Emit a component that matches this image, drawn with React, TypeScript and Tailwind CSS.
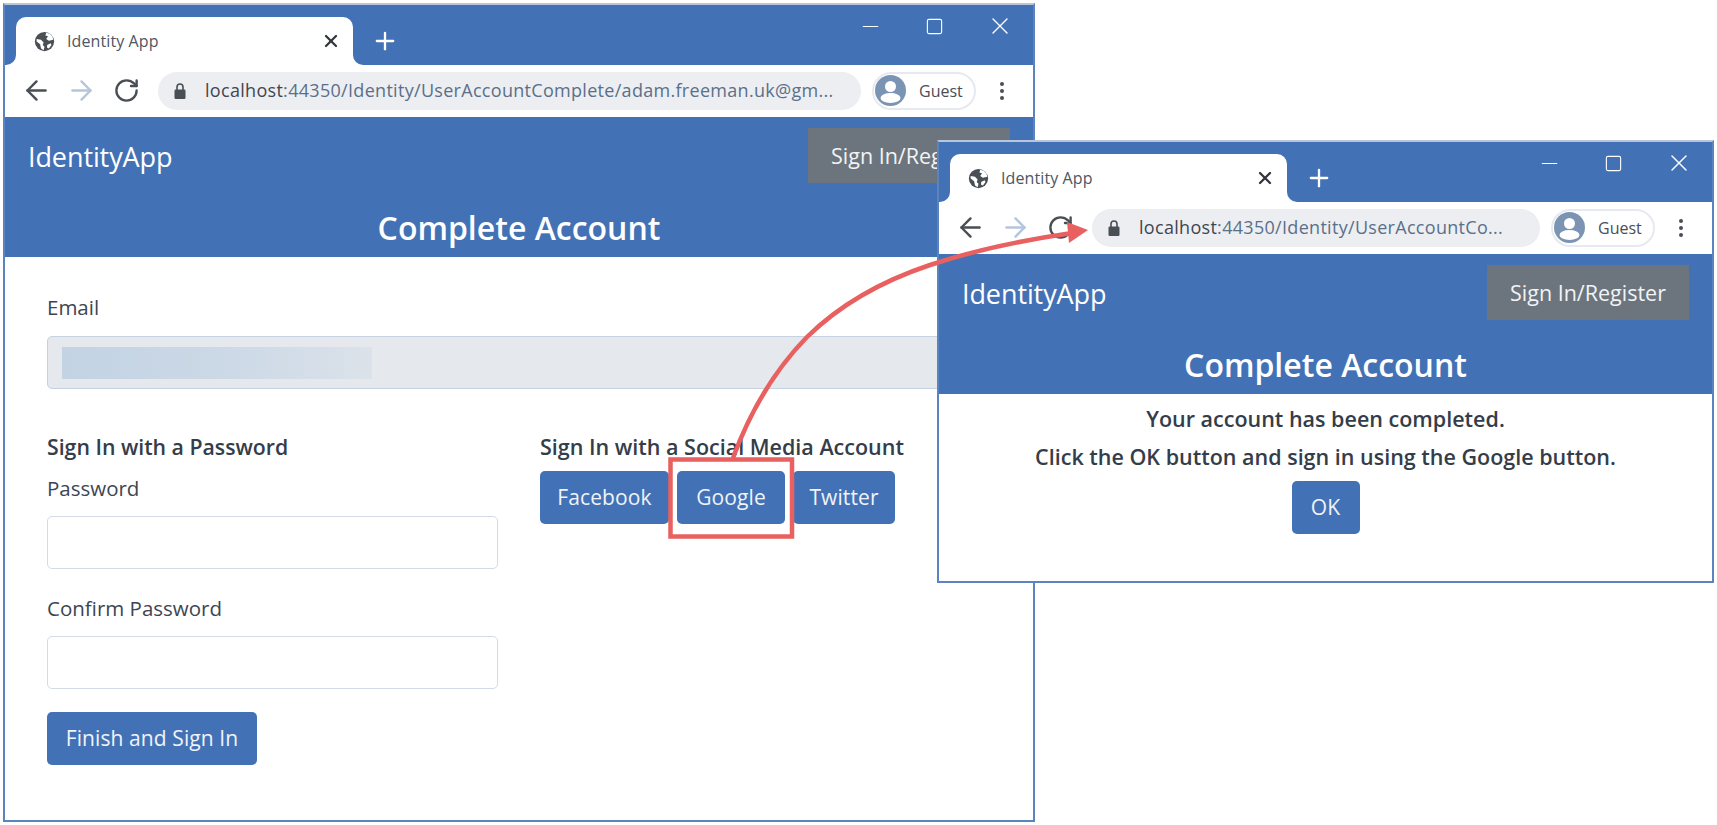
import React from "react";
import { ArrowLeft, ArrowRight, RotateCw, Plus, X, Minus, Square } from "lucide-react";

const Globe = () => (
  <svg width="21" height="21" viewBox="0 0 24 24" className="shrink-0">
    <circle cx="12" cy="12" r="11" fill="#4a4e55" />
    <path d="M3 9l5 1 3 3-1 3 2 2-1 4-3-2-1-5-4-3zM14 2l-1 3 3 1-2 3 3 2 5-1-1-4-3-3zM15 16l4-2 1 2-3 4-2-1z" fill="#fff" />
  </svg>
);

const LockIcon = () => (
  <svg width="12" height="16" viewBox="0 0 12 16" className="shrink-0">
    <path d="M3 7V4a3 3 0 0 1 6 0v3" fill="none" stroke="#4a4e55" strokeWidth="1.6" />
    <rect x="0.5" y="6.5" width="11" height="9.5" rx="1.2" fill="#4a4e55" />
  </svg>
);

const Avatar = () => (
  <svg width="31" height="31" viewBox="0 0 31 31" className="shrink-0">
    <circle cx="15.5" cy="15.5" r="15.5" fill="#7c94b4" />
    <circle cx="15.5" cy="11.5" r="5.5" fill="#fff" />
    <ellipse cx="15.5" cy="23" rx="10" ry="5" fill="#fff" />
  </svg>
);

const MenuDots = () => (
  <div className="flex flex-col gap-[3px]">
    <span className="size-[4px] rounded-full bg-[#4a4e55]" />
    <span className="size-[4px] rounded-full bg-[#4a4e55]" />
    <span className="size-[4px] rounded-full bg-[#4a4e55]" />
  </div>
);

const BrowserChrome = ({ url }: { url: React.ReactNode }) => (
  <>
    <div className="flex h-[60px] bg-[#4272b5]">
      <div className="relative mt-[12px] ml-[11px] flex h-[48px] w-[337px] items-center rounded-t-[10px] bg-white pl-[18px] pr-[12px]">
        <div className="absolute -left-[10px] bottom-0 size-[10px] bg-white">
          <div className="size-full rounded-br-[10px] bg-[#4272b5]" />
        </div>
        <div className="absolute -right-[10px] bottom-0 size-[10px] bg-white">
          <div className="size-full rounded-bl-[10px] bg-[#4272b5]" />
        </div>
        <Globe />
        <span className="ml-[12px] text-[16px] tracking-[0.1px] text-[#4d5663]">Identity App</span>
        <X className="ml-auto size-[20px] text-[#33373d]" strokeWidth={2.8} />
      </div>
      <div className="mt-[12px] ml-[18px] flex h-[48px] items-center">
        <Plus className="size-[28px] text-white" strokeWidth={2} />
      </div>
      <div className="ml-auto flex h-[42px] items-center gap-[42px] pr-[19px] text-white">
        <Minus className="size-[25px]" strokeWidth={1} />
        <Square className="size-[19px]" strokeWidth={1.4} />
        <X className="size-[28px]" strokeWidth={1.2} />
      </div>
    </div>
    <div className="flex h-[52px] items-center bg-white pb-[1px] pl-[9px]">
      <div className="flex w-[45px] justify-center"><ArrowLeft className="size-[31px] shrink-0 text-[#4a4e55]" strokeWidth={1.9} /></div>
      <div className="flex w-[45px] justify-center"><ArrowRight className="size-[31px] shrink-0 text-[#b4c6dc]" strokeWidth={1.9} /></div>
      <div className="flex w-[45px] justify-center"><RotateCw className="size-[27px] shrink-0 text-[#4a4e55]" strokeWidth={2.1} /></div>
      <div className="ml-[9px] flex h-[38px] flex-1 items-center rounded-full bg-[#eceef2] pl-[16px] text-[18px] tracking-[0.3px] whitespace-nowrap">
        <LockIcon />
        <span className="ml-[19px] text-[#5a7089]">{url}</span>
      </div>
      <div className="ml-[11px] flex h-[38px] w-[104px] items-center rounded-full border-2 border-[#e6eaf0] pl-[1px]">
        <Avatar />
        <span className="ml-[13px] text-[16px] text-[#4a4e55]">Guest</span>
      </div>
      <div className="flex w-[57px] justify-center pr-[5px]"><MenuDots /></div>
    </div>
  </>
);

const SiteHeader = () => (
  <div className="bg-[#4272b5] text-white">
    <div className="flex h-[77px] items-center justify-between pr-[23px] pl-[23px]">
      <span className="pt-[4px] text-[27px] tracking-[-0.1px]">IdentityApp</span>
      <span className="flex h-[55px] w-[202px] items-center justify-center bg-[#6c757d] pt-[2px] text-[21.5px] text-[#f1f3f5]">Sign In/Register</span>
    </div>
    <div className="flex h-[63px] items-center justify-center pt-[5px] text-[32px] font-semibold">Complete Account</div>
  </div>
);

const Button = ({ className, children }: { className: string; children: React.ReactNode }) => (
  <span className={`flex h-[53px] items-center justify-center rounded-[5px] bg-[#4272b5] text-[21px] tracking-[0.1px] text-[#f0f3f8] ${className}`}>{children}</span>
);

const Field = ({ label, className }: { label: string; className: string }) => (
  <div className={className}>
    <div className="text-[20.5px] leading-[28px] text-[#3c4653]">{label}</div>
    <div className="mt-[14px] h-[53px] rounded-[5px] border border-[#d3dbe6] bg-white" />
  </div>
);

const App = () => (
  <div className="relative h-[825px] w-[1717px] overflow-hidden bg-white font-['Open_Sans',sans-serif]">
    <div className="absolute top-[3px] left-[3px] h-[819px] w-[1032px] border-2 border-[#5a84bf] border-t-[#b9c6da]">
      <BrowserChrome url={<><span className="text-[#3f4650]">localhost</span>:44350/Identity/UserAccountComplete/adam.freeman.uk@gm...</>} />
      <SiteHeader />
      <div className="px-[42px] pt-[36px]">
        <div className="text-[20.5px] leading-[28px] text-[#3c4653]">Email</div>
        <div className="mt-[15px] flex h-[53px] w-[963px] items-center rounded-[5px] border border-[#c6d2e1] bg-[#e5e8ed] pl-[14px]">
          <div className="h-[32px] w-[310px] bg-linear-to-r from-[#c3d3e4] via-[#cbd8e6] to-[#dbe2ea]" />
        </div>
        <div className="mt-[44px] flex">
          <div className="w-[493px]">
            <div className="text-[21.25px] leading-[28px] font-semibold text-[#343d49]">Sign In with a Password</div>
            <Field label="Password" className="mt-[13px] w-[451px]" />
            <Field label="Confirm Password" className="mt-[25px] w-[451px]" />
            <Button className="mt-[23px] w-[210px]">Finish and Sign In</Button>
          </div>
          <div>
            <div className="text-[21.5px] leading-[28px] font-semibold text-[#343d49]">Sign In with a Social Media Account</div>
            <div className="mt-[10px] flex gap-[8px]">
              <Button className="w-[129px]">Facebook</Button>
              <Button className="w-[108px]">Google</Button>
              <Button className="w-[102px]">Twitter</Button>
            </div>
          </div>
        </div>
      </div>
    </div>

    <div className="absolute top-[140px] left-[937px] h-[443px] w-[777px] border-2 border-[#5a84bf] border-t-[#b9c6da] bg-white">
      <BrowserChrome url={<><span className="text-[#3f4650]">localhost</span>:44350/Identity/UserAccountCo...</>} />
      <SiteHeader />
      <div className="flex flex-col items-center pt-[11px] text-center text-[21.5px] font-semibold text-[#343d49]">
        <div className="leading-[28px]">Your account has been completed.</div>
        <div className="mt-[10px] leading-[28px]">Click the OK button and sign in using the Google button.</div>
        <Button className="mt-[10px] w-[68px] font-normal">OK</Button>
      </div>
    </div>

    <svg className="absolute inset-0" width="1717" height="825" viewBox="0 0 1717 825" fill="none">
      <path d="M733 458 Q760 385 807 337 Q855 290 930 265 Q990 245 1072 233" stroke="#e8605f" strokeWidth="4.5" />
      <path d="M1088 230 L1067 222 L1069 243 Z" fill="#e8605f" />
      <rect x="670.5" y="459.5" width="121.5" height="77" stroke="#e8605f" strokeWidth="4.5" />
    </svg>
  </div>
);

export default App;
